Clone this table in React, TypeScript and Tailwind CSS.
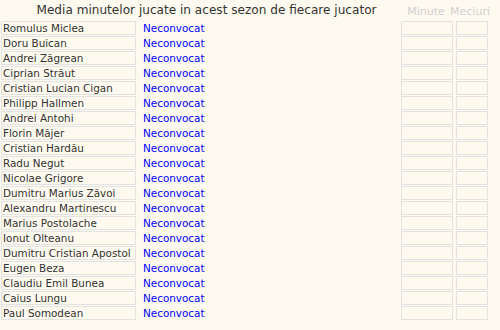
import React from "react";

const players = [
  "Romulus Miclea",
  "Doru Buican",
  "Andrei Zăgrean",
  "Ciprian Străut",
  "Cristian Lucian Cigan",
  "Philipp Hallmen",
  "Andrei Antohi",
  "Florin Măjer",
  "Cristian Hardău",
  "Radu Negut",
  "Nicolae Grigore",
  "Dumitru Marius Zăvoi",
  "Alexandru Martinescu",
  "Marius Postolache",
  "Ionut Olteanu",
  "Dumitru Cristian Apostol",
  "Eugen Beza",
  "Claudiu Emil Bunea",
  "Caius Lungu",
  "Paul Somodean",
];

const App: React.FC = () => {
  return (
    <div className="w-[500px] h-[330px] bg-[#fffaf0] font-['DejaVu_Sans',sans-serif] overflow-hidden">
      <div className="flex h-[21px]">
        <div className="w-[400px] text-center text-[12.1px] leading-[20px] text-[#333] pl-[13px] whitespace-nowrap">
          Media minutelor jucate in acest sezon de fiecare jucator
        </div>
        <div className="w-[52px] flex justify-center text-[11px] leading-[24px] text-[#d0d0d0] whitespace-nowrap">
          Minute
        </div>
        <div className="w-[36px] flex justify-center text-[11px] leading-[24px] text-[#d0d0d0] whitespace-nowrap">
          Meciuri
        </div>
      </div>
      <div className="flex flex-col gap-[1px]">
        {players.map((name) => (
          <div key={name} className="flex h-[14px] items-center">
            <div className="ml-[1px] w-[135px] h-[14px] border border-[#e2e2e2] text-[10.4px] leading-[12px] text-[#333] pl-[1px] whitespace-nowrap overflow-hidden">
              {name}
            </div>
            <div className="ml-[7px] w-[258px] text-[10.4px] leading-[12px] text-[#0000ff]">Neconvocat</div>
            <div className="w-[52px] h-[14px] border border-[#e2e2e2]" />
            <div className="ml-[3px] w-[32px] h-[14px] border border-[#e2e2e2]" />
          </div>
        ))}
      </div>
    </div>
  );
};

export default App;
